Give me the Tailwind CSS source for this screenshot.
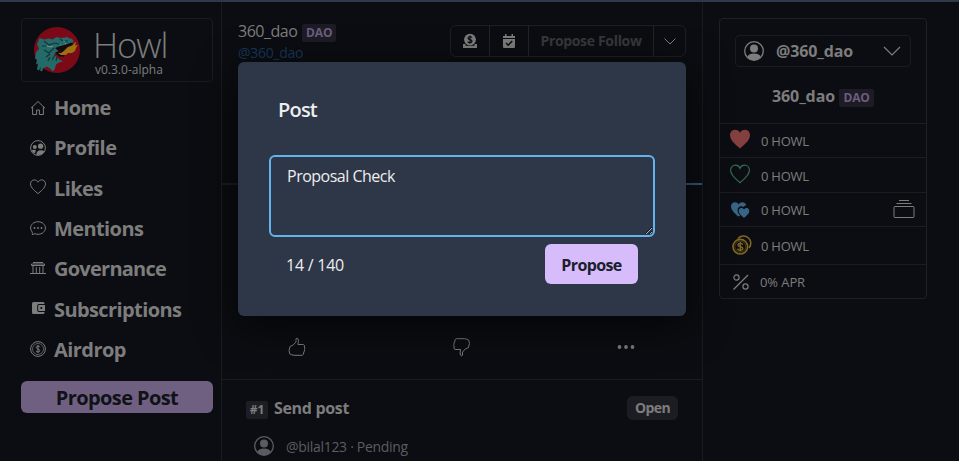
<!DOCTYPE html>
<html lang="en">
<head>
<meta charset="utf-8">
<title>Howl</title>
<script src="https://cdn.jsdelivr.net/npm/@tailwindcss/browser@4"></script>
</head>
<body class="relative h-[461px] w-[959px] overflow-hidden border-t-2 border-[#2f374b] bg-[#0c0d12] font-['Open_Sans','Noto_Sans',sans-serif] text-[#7d7d7d]">
<div class="flex h-full">

  <!-- Navigation -->
  <aside class="flex h-full w-[222px] shrink-0 flex-col border-r border-[#191b20] pt-4 pl-[21px]">
    <div class="flex h-16 w-48 items-center rounded border border-[#191b20] pl-3">
      <svg class="size-[46px] shrink-0" viewBox="0 0 46 46">
        <circle cx="23" cy="23" r="23" fill="#7b0918"/>
        <path d="M5.500 11l5 1.500 4-1 4 1 4-2.500 4 1 4-.5 3-.5 2 1.500 2 0 2 2-.5 3-4 1.500-5 .5-3 3-4 3-3 3 4 4 5 3-4 1-3 2-1 4-2 3-3-3-3-2-4 2-1 3-2-1 1-4-2 4-2-1 1-6-2 1 1-5-2-1 1-6 3-4-2-4z" fill="#246a69"/>
        <path d="M21 21l5-2 5-1 5-2 3-.5-1 3-5 2-4 4 2 3-1 2-5 0-4-4 4-1z" fill="#130b10"/>
        <path d="M24 26l3 0 3-2 4-4 3-1 2-1 2-3 1 .5-1 3 3-.5-2 3-1 3-3 2-4 0-2 2-5 0z" fill="#9c7210"/>
        <path d="M10 14l5 4 6-2 4 1M10 23l5 3 5-5M12 30l4-3M18 33l3-5M26 12l3 2 5 0M8 19l4 0M14 34l2-4M22 34l1-4" fill="none" stroke="#113638" stroke-width="1.200"/>
        <path d="M13 19l4 1 2-1M29 14l2 .5M26 18.500l1-1M31 17l1-1" fill="none" stroke="#8fa09c" stroke-width=".8"/>
      </svg>
      <div class="mt-1.5 ml-[13px] flex flex-col">
        <span class="h-[33px] text-[35px] leading-[33px] font-light tracking-[-1.2px]">Howl</span>
        <span class="ml-0.5 h-[17px] text-xs leading-[18px]">v0.3.0-alpha</span>
      </div>
    </div>
    <nav class="mt-[6px] flex flex-col pl-[9px] text-xl font-bold tracking-[-0.6px]">
      <a class="flex h-[40.3px] items-center gap-2"><svg class="size-4 fill-none stroke-current" viewBox="0 0 16 16"><path d="M1 8.200L8 1.500l7 6.700M2.600 7v7.500h4V10h2.800v4.500h4V7"/></svg>Home</a>
      <a class="flex h-[40.3px] items-center gap-2"><svg class="size-4 shrink-0" viewBox="0 0 16 16"><circle cx="8" cy="8" r="7.400" fill="none" stroke="currentColor"/><circle cx="4.800" cy="7" r="2" fill="currentColor"/><circle cx="10.600" cy="6.200" r="2.600" fill="currentColor"/><path d="M1.500 10.200q2-.8 4.500 0L4.800 13.500Q2.300 12.500 1.500 10.200zM6.300 14.800q.3-4.600 4.300-4.600 2.500 0 4 1-2.300 4.600-8.300 3.600z" fill="currentColor"/></svg><span class="tracking-[-0.45px]">Profile</span></a>
      <a class="flex h-[40.3px] items-center gap-2"><svg class="-mt-1 size-4 fill-none stroke-current" viewBox="0 0 16 16"><path d="M8 14.700C5.800 12.500.5 9 .5 4.900.5 2.500 2.200.9 4.300.9 6 .9 7.300 1.900 8 3.200 8.700 1.900 10 .9 11.700.9c2.100 0 3.800 1.600 3.800 4C15.500 9 10.200 12.500 8 14.700z"/></svg>Likes</a>
      <a class="flex h-[40.3px] items-center gap-2"><svg class="-mt-0.5 size-4" viewBox="0 0 16 16"><path d="M2.200 14.500c.3-1 .3-2-.3-3A5.900 5.900 0 0 1 .6 8C.6 4.600 3.900 1.700 8 1.700s7.400 2.900 7.400 6.300S12.100 14.300 8 14.300c-1.200 0-2.200-.3-3.100-.7-.8.700-1.700.9-2.700.9z" fill="none" stroke="currentColor"/><circle cx="4.500" cy="8" r=".9" fill="currentColor"/><circle cx="8" cy="8" r=".9" fill="currentColor"/><circle cx="11.500" cy="8" r=".9" fill="currentColor"/></svg>Mentions</a>
      <a class="flex h-[40.3px] items-center gap-2"><svg class="-mt-0.5 size-4 fill-none stroke-current" viewBox="0 0 16 16"><path d="M3 2.500h10M1.500 5.500v-1.500h13v1.500zM0 13.500h16M3 6v7.500M6.300 7v6.500M9.700 7v6.500M13 6v7.500"/></svg><span class="tracking-[-0.75px]">Governance</span></a>
      <a class="flex h-[40.3px] items-center gap-2"><svg class="-mt-1 size-4" viewBox="0 0 16 16"><path d="M3.500 2h9.500a1.500 1.500 0 0 1 1.500 1.500V4H9A1.800 1.800 0 0 0 7.200 5.800v4.400A1.800 1.800 0 0 0 9 12h5.500v.5A1.500 1.500 0 0 1 13 14H3.500A1.500 1.500 0 0 1 2 12.500v-9A1.500 1.500 0 0 1 3.500 2z" fill="currentColor"/><path d="M9 5h6v6H9a.8.800 0 0 1-.8-.8V5.800A.8.800 0 0 1 9 5zm2.300 1.900a1.100 1.100 0 1 0 0 2.200 1.100 1.100 0 0 0 0-2.200z" fill="currentColor" fill-rule="evenodd"/></svg>Subscriptions</a>
      <a class="flex h-[40.3px] items-center gap-2"><svg class="-mt-0.5 size-4 fill-none stroke-current" viewBox="0 0 16 16"><circle cx="8" cy="8" r="7.400"/><circle cx="8" cy="8" r="5.500" stroke-width=".7"/><path d="M9.800 6.300Q9.500 5 8 5T6.200 6.400Q6.200 7.500 8 8t1.800 1.600Q9.800 11 8 11T6.200 9.700M8 4v8"/></svg><span class="tracking-[-0.54px]">Airdrop</span></a>
    </nav>
    <button class="mt-[11px] h-8 w-48 rounded-md bg-[#6f6082] text-xl leading-[34px] font-bold tracking-[-0.6px] text-[#101217]">Propose Post</button>
  </aside>

  <!-- Profile feed -->
  <main class="flex h-full w-[481px] shrink-0 flex-col border-r border-[#191b20]">
    <header class="flex h-[60px] shrink-0 justify-between px-4 pt-4">
      <div>
        <div class="flex h-6 items-center"><span class="mt-px text-base tracking-[-0.5px]">360_dao</span><span class="mt-1.5 ml-[5px] flex h-[18px] w-[34px] items-center justify-center rounded-xs bg-[#1d1c24] text-xs font-bold text-[#6c5c80]">DAO</span></div>
        <div class="text-sm leading-[22px] tracking-[-0.3px] text-[#19375a]">@360_dao</div>
      </div>
      <div class="mt-[7px] flex h-8 w-[236px] divide-x divide-[#22242a] rounded-md border border-[#1d1f24]">
        <div class="flex w-[39px] items-center justify-center"><svg class="size-4" viewBox="0 0 16 16"><path d="M1 11h2.500v1.800h9V11H15v4H1z" fill="currentColor"/><circle cx="8" cy="6.600" r="5.900" fill="currentColor"/><path d="M10 4.700Q9.500 3.500 8 3.500T6 5q0 1.200 2 1.600t2 1.700Q10 9.700 8 9.700T6 8.500M8 2.500v8.200" fill="none" stroke="#0c0d12" stroke-width="1.200"/></svg></div>
        <div class="flex w-[39px] items-center justify-center"><svg class="size-4" viewBox="0 0 16 16"><path d="M2 3h2V1h1.500v2h5V1H12v2h2v2H2zM2 6h12v8a1 1 0 0 1-1 1H3a1 1 0 0 1-1-1z" fill="currentColor"/><path d="M5 10l2.200 2.200L11.200 8" fill="none" stroke="#0c0d12" stroke-width="1.600"/></svg></div>
        <div class="flex grow items-center justify-center text-sm font-bold tracking-[-0.33px] whitespace-nowrap text-[#36383c]">Propose Follow</div>
        <div class="flex w-[31px] items-center justify-center"><svg class="size-4 fill-none stroke-current" viewBox="0 0 16 16"><path d="M2.500 5.500L8 11l5.500-5.500"/></svg></div>
      </div>
    </header>
    <div class="mt-[121px] flex h-0.5 shrink-0"><div class="grow bg-[#1b1d22]"></div><div class="w-60 bg-[#315878]"></div></div>
    <div class="mt-[132px] flex h-[63px] shrink-0 border-b border-[#191b20]">
      <div class="flex w-[151px] justify-center pt-5"><svg class="size-5 fill-none stroke-current" viewBox="0 0 20 20"><path d="M3 9.500l3-1.300 3-3.300V1.700q1-1.300 2.100.2.800 1.700-.2 5.600h5.400q2 .7 1 2.500 1 1.200.2 2.500.5 1.600-.7 2.500.2 2.800-1.600 3.300H7Q4.500 18 2.700 16.800 1.300 14 3 9.500z"/></svg></div>
      <div class="flex w-[178px] justify-center pt-5"><svg class="size-5 fill-none stroke-current" viewBox="0 0 20 20"><path d="M17.500 10.500l-3 1.300-3 3.300v3.200q-1 1.300-2.100-.2-.8-1.700.2-5.600H4.200q-2-.7-1-2.500-1-1.200-.2-2.500-.5-1.600.7-2.500-.2-2.800 1.600-3.300h8.200q2.500.3 4.300 1.500 1.400 2.800-.3 7.300z"/></svg></div>
      <div class="flex w-[153px] justify-center pt-5"><svg class="size-5 fill-current" viewBox="0 0 20 20"><circle cx="3.500" cy="10" r="1.900"/><circle cx="10" cy="10" r="1.900"/><circle cx="16.500" cy="10" r="1.900"/></svg></div>
    </div>
    <section class="flex flex-col px-6 pt-4">
      <div class="flex h-6 items-center justify-between">
        <div class="flex items-center"><span class="mt-1 flex h-[18px] w-[22px] items-center justify-center rounded-xs bg-[#1d1e24] text-xs font-bold">#1</span><span class="ml-1.5 text-base font-bold tracking-[-0.33px]">Send post</span></div>
        <span class="flex h-6 w-[51px] items-center justify-center rounded-md bg-[#1c1d22] text-sm font-bold tracking-[-0.6px]">Open</span>
      </div>
      <div class="mt-[15px] flex h-6 items-center pl-2 text-[#5b5c60]"><svg class="-mt-0.5 size-5" viewBox="0 0 20 20"><circle cx="10" cy="10" r="9.300" fill="none" stroke="currentColor" stroke-width="1.300"/><circle cx="10" cy="7.500" r="4" fill="currentColor"/><path d="M3.500 16Q4 12.500 10 12.500T16.500 16Q14 19.300 10 19.300T3.500 16z" fill="currentColor"/></svg><span class="ml-3 text-sm tracking-[-0.3px] whitespace-nowrap">@bilal123 · Pending</span></div>
    </section>
  </main>

  <!-- Account card -->
  <aside class="pt-4 pl-4">
    <div class="h-[281px] w-[208px] rounded-sm border border-[#1e2025] text-[13px] tracking-[-0.25px]">
      <div class="flex h-[104px] flex-col items-center pt-4">
        <div class="flex h-8 w-44 items-center rounded-sm border border-[#191b20] px-2"><svg class="size-5" viewBox="0 0 20 20"><circle cx="10" cy="10" r="9.300" fill="none" stroke="currentColor" stroke-width="1.300"/><circle cx="10" cy="7.500" r="4" fill="currentColor"/><path d="M3.500 16Q4 12.500 10 12.500T16.500 16Q14 19.300 10 19.300T3.500 16z" fill="currentColor"/></svg><span class="ml-3 text-base font-bold tracking-[-0.13px]">@360_dao</span><svg class="ml-auto size-5 fill-none stroke-current" viewBox="0 0 20 20"><path d="M2 6l8 8 8-8" stroke-width="1.200"/></svg></div>
        <div class="mt-4 flex h-6 items-center"><span class="mt-px text-base font-bold tracking-[-0.1px]">360_dao</span><span class="mt-1.5 ml-1 flex h-[18px] w-[35px] items-center justify-center rounded-xs bg-[#1d1c24] text-xs font-bold text-[#6c5c80]">DAO</span></div>
      </div>
      <div class="flex h-[34px] items-center border-t border-[#1b1d22] px-2.5"><svg class="mb-1 size-5 fill-[#84403f]" viewBox="0 0 20 20"><path d="M10 19.500C7 16.500 0 12 0 6.300 0 3 2.300.8 5 .8c2.200 0 4.200 1.200 5 3 .8-1.800 2.800-3 5-3 2.700 0 5 2.200 5 5.500 0 5.700-7 10.200-10 13.200z"/></svg><span class="mt-0.5 ml-[11px]">0 HOWL</span></div>
      <div class="flex h-[35px] items-center border-t border-[#1b1d22] px-2.5"><svg class="mb-0.5 size-5 fill-none stroke-[#346b50]" viewBox="0 0 20 20"><path d="M10 18.700C7 15.800.6 11.500.6 6.200.6 3.200 2.800 1.200 5.300 1.200c2.100 0 4 1.300 4.700 3.100.7-1.800 2.600-3.100 4.700-3.100 2.500 0 4.700 2 4.700 5 0 5.300-6.400 9.600-9.400 12.500z" stroke-width="1.200"/></svg><span class="mt-1 ml-[11px]">0 HOWL</span></div>
      <div class="flex h-[34px] items-center border-t border-[#1b1d22] pr-[11px] pl-2.5"><svg class="size-5 fill-[#366587]" viewBox="0 0 20 20"><path d="M8.300 16.500C4.500 13 1 10 1 6.300 1 4 2.700 2.300 4.800 2.300c1.700 0 3.100.8 3.800 2.200.7-1.400 2.100-2.200 3.800-2.200 2 0 3.600 1.300 3.900 3.300-1.200-.1-2.200.5-3 1.300-2.700-1.700-6.100.2-5.700 3.500.1 2 1 3.600 2.800 5.100z"/><path d="M14 17.800c-2-2-5.300-4-5.300-6.900 0-1.700 1.200-2.900 2.700-2.900 1.200 0 2.100.6 2.600 1.600.500-1 1.400-1.600 2.600-1.600 1.500 0 2.700 1.200 2.700 2.900 0 2.900-3.300 4.900-5.300 6.900z"/></svg><span class="mt-0.5 ml-[11px]">0 HOWL</span><svg class="mb-0.5 ml-auto h-5 w-[22px] fill-none stroke-current" viewBox="0 0 22 20"><path d="M6 1.500h10M3.500 4.500h15"/><rect x="1" y="7.500" width="20" height="11" rx="1"/></svg></div>
      <div class="flex h-[38px] items-center border-t border-[#1b1d22] pl-3"><svg class="-mt-0.5 size-5 fill-none stroke-[#806720]" viewBox="0 0 20 20"><circle cx="8.300" cy="11.700" r="7.300" stroke-width="1.600"/><path d="M6 3.500A7.200 7.200 0 1 1 17 13" stroke-width="1.600"/><circle cx="8.300" cy="11.700" r="5.500" stroke-width=".5"/><path d="M10.800 9.800Q10.400 8.400 8.300 8.400T5.900 10q0 1.300 2.400 1.700t2.500 1.800q0 1.600-2.500 1.600T5.700 13.600M8.300 7v9.400" stroke-width="1.400"/></svg><span class="mt-0.5 ml-[9px]">0 HOWL</span></div>
      <div class="flex h-[34px] items-center border-t border-[#1b1d22] pl-3"><svg class="size-[18px] fill-none stroke-current" viewBox="0 0 18 18"><path d="M1.500 16.500L16 2" stroke-width="1.200"/><circle cx="4.500" cy="4.500" r="2.600" stroke-width="1.200"/><circle cx="13.500" cy="13.500" r="2.600" stroke-width="1.200"/></svg><span class="mt-[3px] ml-2.5 tracking-[-0.1px]">0% APR</span></div>
    </div>
  </aside>
</div>

<!-- Post dialog -->
<div role="dialog" class="absolute top-[60px] left-[238px] flex h-[254px] w-[448px] flex-col rounded-md bg-[#2d3748] px-[31px] text-[#ededee] shadow-[0_10px_40px_#000000aa]">
  <h2 class="mt-8 ml-[9px] h-8 text-xl leading-8 font-semibold tracking-[-0.8px]">Post</h2>
  <textarea class="mt-[29px] block h-[82px] w-[386px] shrink-0 resize rounded-md border-2 border-[#63b3ed] px-4 py-2 text-base leading-[22px] tracking-[-0.5px] outline-none">Proposal Check</textarea>
  <div class="mt-[7px] flex h-10 items-center justify-between pr-[17px] pl-[17px]">
    <span class="mt-px text-base tracking-[-0.24px]">14 / 140</span>
    <button class="h-10 w-[93px] rounded-md bg-[#d6bcfa] pt-px text-base font-bold tracking-[-0.6px] text-[#1a202c]">Propose</button>
  </div>
</div>
</body>
</html>
